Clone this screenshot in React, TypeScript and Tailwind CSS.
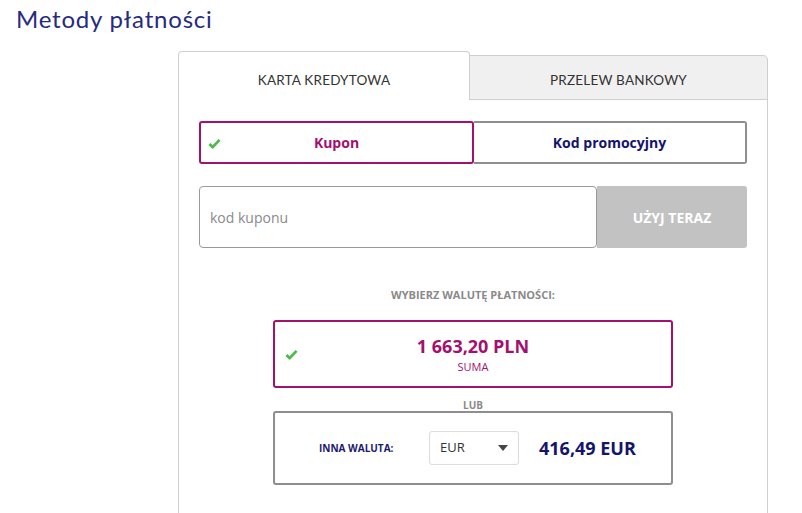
import React from 'react'

const Check = ({ className }: { className?: string }) => (
  <svg viewBox="0 0 14 12" className={className} fill="none">
    <path d="M1.5 6.5 L5 10 L12.5 2" stroke="#4cbb47" strokeWidth="3" strokeLinejoin="round" />
  </svg>
)

const App: React.FC = () => {
  return (
    <div className="w-[802px] h-[513px] overflow-hidden bg-white font-['Open_Sans',sans-serif]">
      <h1 className="pl-[16px] pt-[4px] text-[24px] leading-[30px] font-normal text-[#262a80] tracking-[0.8px] font-['Lato',sans-serif]">
        Metody płatności
      </h1>

      <div className="ml-[178px] mt-[17px] w-[590px]">
        {/* tabs */}
        <div className="flex items-end">
          <div className="w-[292px] h-[49px] pt-[8px] border-t border-l border-r border-[#cfcfcf] rounded-tl-[4px] rounded-tr-[4px] bg-white flex items-center justify-center text-[13.5px] text-[#333] font-['Lato',sans-serif] tracking-[0.2px]">
            KARTA KREDYTOWA
          </div>
          <div className="flex-1 h-[45px] pt-[5px] border border-l-0 border-[#cfcfcf] rounded-tr-[5px] bg-[#f0f0f0] flex items-center justify-center text-[13.5px] text-[#333] font-['Lato',sans-serif] tracking-[0.2px]">
            PRZELEW BANKOWY
          </div>
        </div>

        {/* body */}
        <div className="h-[420px] border-l border-r border-[#cfcfcf] px-[20px] pt-[21px]">
          <div className="flex h-[43px]">
            <button className="relative w-[275px] border-2 border-[#a3106e] rounded-[3px] flex items-center justify-center text-[14px] font-bold text-[#a3106e]">
              <Check className="absolute left-[7px] top-[15px] w-[13px] h-[11px]" />
              Kupon
            </button>
            <button className="flex-1 border-2 border-l-0 border-[#8e8e8e] rounded-r-[3px] flex items-center justify-center text-[14px] font-bold text-[#14146b]">
              Kod promocyjny
            </button>
          </div>

          <div className="flex h-[62px] mt-[22px]">
            <div className="w-[398px] border border-[#9a9a9a] rounded-[4px] flex items-center pl-[10px] text-[14px] text-[#8a8a8a]">
              kod kuponu
            </div>
            <button className="flex-1 bg-[#c2c2c2] rounded-r-[3px] text-white text-[14px] font-bold flex items-center justify-center">
              UŻYJ TERAZ
            </button>
          </div>

          <div className="w-[400px] mx-auto">
            <p className="mt-[40px] text-center text-[11px] font-bold text-[#8a8a8a] leading-[14px]">
              WYBIERZ WALUTĘ PŁATNOŚCI:
            </p>
            <div className="relative mt-[18px] h-[68px] border-2 border-[#a3106e] rounded-[3px] flex flex-col items-center justify-center pt-[2px]">
              <Check className="absolute left-[10px] top-[27px] w-[13px] h-[11px]" />
              <span className="text-[18px] font-bold text-[#a3106e] leading-[22px]">1 663,20 PLN</span>
              <span className="text-[11px] text-[#a3106e] leading-[16px] mt-[2px]">SUMA</span>
            </div>
            <p className="mt-[11px] text-center text-[10px] font-bold text-[#8a8a8a] leading-[12px]">LUB</p>
            <div className="h-[74px] border-2 border-[#8e8e8e] rounded-[3px] flex items-center">
              <span className="ml-[44px] w-[110px] text-[10px] font-bold text-[#1c1870]">INNA WALUTA:</span>
              <div className="w-[90px] h-[34px] border border-[#dcdcdc] rounded-[3px] flex items-center justify-between pl-[10px] pr-[10px] text-[13px] text-[#333]">
                EUR
                <svg viewBox="0 0 10 6" className="w-[10px] h-[6px]">
                  <path d="M0 0 H10 L5 6 Z" fill="#444" />
                </svg>
              </div>
              <span className="ml-[20px] text-[18px] font-bold text-[#14146b]">416,49 EUR</span>
            </div>
          </div>
        </div>
      </div>
    </div>
  )
}

export default App
